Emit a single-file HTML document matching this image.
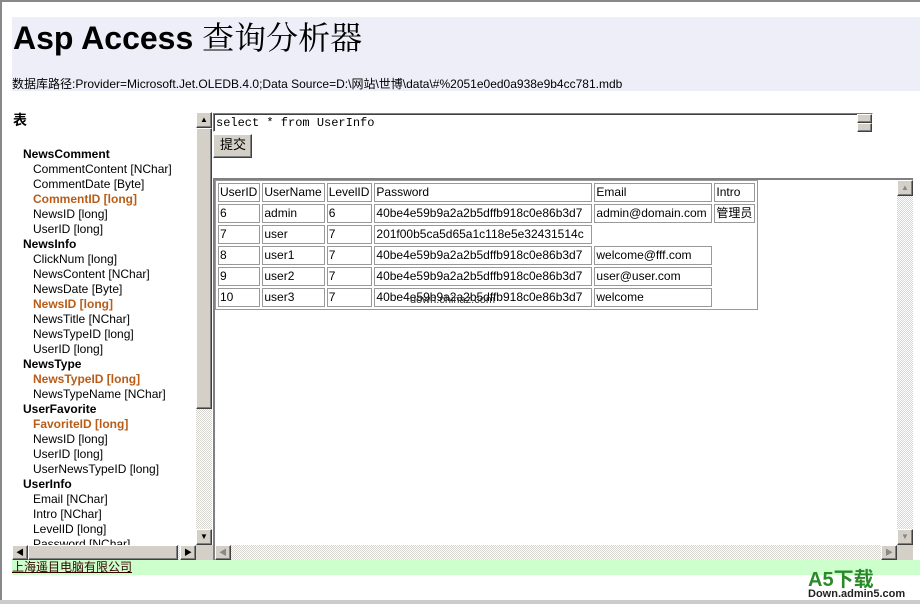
<!DOCTYPE html>
<html><head><meta charset="utf-8"><style>
body{margin:0;width:920px;height:604px;background:#fff;position:relative;overflow:hidden;font-family:"Liberation Sans","Noto Sans CJK SC",sans-serif;font-size:12px;color:#000}
.a{position:absolute}
.chk{background:repeating-conic-gradient(#fff 0 25%,#d8d6d0 0 50%) 0 0/2px 2px}
.btn{background:#d4d0c8;border:1px solid;border-color:#fff #404040 #404040 #fff;box-sizing:border-box;box-shadow:inset -1px -1px #808080}
.arr{font-size:8px;text-align:center;line-height:14px;color:#000}
.tree div{height:15px;line-height:15px;white-space:nowrap;font-size:12px}
.t{font-weight:bold;padding-left:11px}
.f{padding-left:21px}
.o{color:#b85c18;font-weight:bold}
table{border-collapse:separate;border-spacing:2px;border:1px solid #999;font-size:12px}
td{border:1px solid #999;height:17px;padding:0 2px 0 1px;white-space:nowrap;line-height:17px}
</style></head><body>
<div class="a" style="left:0;top:0;width:2px;height:604px;background:#888"></div>
<div class="a" style="left:0;top:0;width:920px;height:2px;background:#888"></div>
<div class="a" style="left:0;top:600px;width:920px;height:4px;background:#ccc"></div>
<div class="a" style="left:12px;top:17px;width:908px;height:74px;background:#eeeef9"></div>
<div class="a" style="left:13px;top:16px;font-size:32px;font-weight:bold;line-height:40px;white-space:nowrap">Asp Access <span style="font-weight:normal;font-family:'Noto Serif CJK SC','Noto Sans CJK SC',serif">查询分析器</span></div>
<div class="a" style="left:12px;top:76px;font-size:12px;line-height:16px;white-space:nowrap">数据库路径:Provider=Microsoft.Jet.OLEDB.4.0;Data Source=D:\网站\世博\data\#%2051e0ed0a938e9b4cc781.mdb</div>
<div class="a" style="left:13px;top:110px;font-weight:bold;font-size:14px">表</div>
<div class="a tree" style="left:12px;top:147px;width:184px;height:398px;overflow:hidden">
<div class="t">NewsComment</div><div class="f">CommentContent [NChar]</div><div class="f">CommentDate [Byte]</div><div class="f o">CommentID [long]</div><div class="f">NewsID [long]</div><div class="f">UserID [long]</div>
<div class="t">NewsInfo</div><div class="f">ClickNum [long]</div><div class="f">NewsContent [NChar]</div><div class="f">NewsDate [Byte]</div><div class="f o">NewsID [long]</div><div class="f">NewsTitle [NChar]</div><div class="f">NewsTypeID [long]</div><div class="f">UserID [long]</div>
<div class="t">NewsType</div><div class="f o">NewsTypeID [long]</div><div class="f">NewsTypeName [NChar]</div>
<div class="t">UserFavorite</div><div class="f o">FavoriteID [long]</div><div class="f">NewsID [long]</div><div class="f">UserID [long]</div><div class="f">UserNewsTypeID [long]</div>
<div class="t">UserInfo</div><div class="f">Email [NChar]</div><div class="f">Intro [NChar]</div><div class="f">LevelID [long]</div><div class="f">Password [NChar]</div>
</div>
<div class="a chk" style="left:196px;top:112px;width:16px;height:433px"></div>
<div class="a btn arr" style="left:196px;top:112px;width:16px;height:16px">▲</div>
<div class="a btn" style="left:196px;top:128px;width:16px;height:281px"></div>
<div class="a btn arr" style="left:196px;top:529px;width:16px;height:16px">▼</div>
<div class="a chk" style="left:12px;top:545px;width:184px;height:15px"></div>
<div class="a btn arr" style="left:12px;top:545px;width:16px;height:15px">◀</div>
<div class="a btn" style="left:28px;top:545px;width:150px;height:15px"></div>
<div class="a btn arr" style="left:180px;top:545px;width:16px;height:15px">▶</div>
<div class="a" style="left:196px;top:545px;width:17px;height:15px;background:#d4d0c8"></div>
<div class="a" style="left:213px;top:113px;width:660px;height:19px;border:1px solid;border-color:#808080 #fff #fff #808080;box-sizing:border-box;box-shadow:inset 1px 1px #404040"></div>
<div class="a" style="left:216px;top:116px;font-family:'Liberation Mono',monospace;font-size:12px">select * from UserInfo</div>
<div class="a btn" style="left:857px;top:114px;width:15px;height:9px"></div>
<div class="a btn" style="left:857px;top:123px;width:15px;height:9px"></div>
<div class="a btn" style="left:213px;top:134px;width:39px;height:24px;font-size:13px;line-height:20px;padding-left:6px">提交</div>
<div class="a" style="left:213px;top:178px;width:700px;height:382px;border-top:2px solid #808080;border-left:2px solid #808080;box-sizing:border-box"></div>
<div class="a" style="left:215px;top:180px">
<table>
<tr><td>UserID</td><td>UserName</td><td>LevelID</td><td style="width:213px">Password</td><td style="width:113px">Email</td><td>Intro</td></tr>
<tr><td>6</td><td>admin</td><td>6</td><td>40be4e59b9a2a2b5dffb918c0e86b3d7</td><td>admin@domain.com</td><td>管理员</td></tr>
<tr><td>7</td><td>user</td><td>7</td><td>201f00b5ca5d65a1c118e5e32431514c</td></tr>
<tr><td>8</td><td>user1</td><td>7</td><td>40be4e59b9a2a2b5dffb918c0e86b3d7</td><td>welcome@fff.com</td></tr>
<tr><td>9</td><td>user2</td><td>7</td><td>40be4e59b9a2a2b5dffb918c0e86b3d7</td><td>user@user.com</td></tr>
<tr><td>10</td><td>user3</td><td>7</td><td>40be4e59b9a2a2b5dffb918c0e86b3d7</td><td>welcome</td></tr>
</table></div>
<div class="a" style="left:410px;top:294px;font-size:11px;color:#333">down.chinaz.com</div>
<div class="a chk" style="left:897px;top:180px;width:16px;height:365px"></div>
<div class="a btn arr" style="left:897px;top:180px;width:16px;height:16px;color:#888">▲</div>
<div class="a btn arr" style="left:897px;top:529px;width:16px;height:16px;color:#888">▼</div>
<div class="a chk" style="left:215px;top:545px;width:682px;height:15px"></div>
<div class="a btn arr" style="left:215px;top:545px;width:16px;height:15px;color:#888">◀</div>
<div class="a btn arr" style="left:881px;top:545px;width:16px;height:15px;color:#888">▶</div>
<div class="a" style="left:897px;top:545px;width:16px;height:15px;background:#d4d0c8"></div>
<div class="a" style="left:12px;top:560px;width:908px;height:15px;background:#ccffcc"></div>
<div class="a" style="left:12px;top:559px;font-size:12px;line-height:16px;color:#300;text-decoration:underline">上海遥目电脑有限公司</div>
<div class="a" style="left:808px;top:570px;font-size:20px;font-weight:bold;color:#2a8a2a;line-height:20px">A5下载</div>
<div class="a" style="left:808px;top:588px;font-size:11px;font-weight:bold;color:#222;line-height:12px">Down.admin5.com</div>
</body></html>
